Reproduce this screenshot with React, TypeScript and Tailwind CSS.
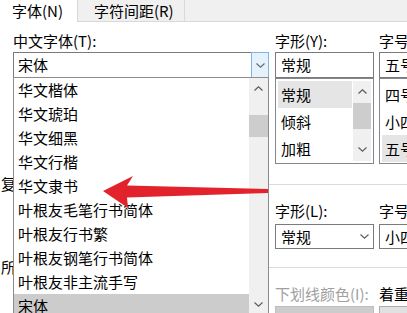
import React from "react";

const fontItems = [
  "华文楷体",
  "华文琥珀",
  "华文细黑",
  "华文行楷",
  "华文隶书",
  "叶根友毛笔行书简体",
  "叶根友行书繁",
  "叶根友钢笔行书简体",
  "叶根友非主流手写",
  "宋体",
];

const ChevronUp: React.FC = () => (
  <svg width="9" height="5" viewBox="0 0 9 5" fill="none">
    <polyline points="0.5,4.5 4.5,0.8 8.5,4.5" stroke="#606060" strokeWidth="1.3" />
  </svg>
);

const ChevronDown: React.FC<{ color?: string }> = ({ color = "#606060" }) => (
  <svg width="9" height="5" viewBox="0 0 9 5" fill="none">
    <polyline points="0.5,0.5 4.5,4.2 8.5,0.5" stroke={color} strokeWidth="1.2" />
  </svg>
);

const ListBox: React.FC<{ items: string[]; selected: number; scrollbar?: boolean }> = ({
  items,
  selected,
  scrollbar,
}) => (
  <div className="flex h-[86px] border border-[#828790] bg-white p-[2px]">
    <div className="flex-1 flex flex-col">
      {items.map((it, i) => (
        <div
          key={it}
          className={`h-[27px] leading-[27px] pl-[3px] text-[15px] ${i === selected ? "bg-[#e5e5e5]" : ""}`}
        >
          {it}
        </div>
      ))}
    </div>
    {scrollbar && (
      <div className="w-[18px] ml-[1px] flex flex-col items-center bg-[#f0f0f0]">
        <div className="h-[20px] flex items-center justify-center">
          <ChevronUp />
        </div>
        <div className="mt-[2px] h-[26px] w-full bg-[#cdcdcd]" />
        <div className="mt-[10px] h-[20px] flex items-center justify-center">
          <ChevronDown />
        </div>
      </div>
    )}
  </div>
);

const Label: React.FC<{ children: React.ReactNode; muted?: boolean }> = ({ children, muted }) => (
  <div className={`h-[20px] leading-[20px] text-[15px] whitespace-nowrap ${muted ? "text-[#a0a0a0]" : ""}`}>
    {children}
  </div>
);

const GroupLine: React.FC<{ title: string }> = ({ title }) => (
  <div className="-ml-[12px] flex items-center h-[20px]">
    <span className="text-[15px] leading-[20px] whitespace-nowrap">{title}</span>
    <div className="ml-2 flex-1 h-px bg-[#dcdcdc]" />
  </div>
);

export default function App() {
  return (
    <div className="relative w-[407px] h-[313px] overflow-hidden bg-white text-black font-['Noto_Sans_CJK_SC',sans-serif]">
      {/* tabs */}
      <div className="flex h-[22px] bg-[#f0f0f0] border-b border-[#d9d9d9]">
        <div className="w-[78px] h-[22px] bg-white border-r border-[#d9d9d9] pl-[12px] text-[15px] leading-[21px]">
          字体(N)
        </div>
        <div className="w-[107px] border-r border-[#d9d9d9] pl-[16px] text-[15px] leading-[21px]">
          字符间距(R)
        </div>
      </div>

      {/* body */}
      <div className="pl-[13px] pt-[9px] w-[520px]">
        <div className="flex">
          <div className="w-[256px]">
            <Label>中文字体(T):</Label>
            <div className="relative mt-[1px] h-[26px] border border-[#7a7a7a] pl-[4px] text-[15px] leading-[24px]">
              宋体
              <div className="absolute -right-px -top-px -bottom-px w-[18px] border border-[#7eb4ea] bg-[#e5f1fb] flex items-center justify-center">
                <ChevronDown color="#5b6f86" />
              </div>
            </div>
          </div>
          <div className="w-[99px] ml-[6px]">
            <Label>字形(Y):</Label>
            <div className="mt-[1px] h-[26px] border border-[#7a7a7a] pl-[5px] text-[15px] leading-[24px]">常规</div>
            <ListBox items={["常规", "倾斜", "加粗"]} selected={0} scrollbar />
          </div>
          <div className="w-[99px] ml-[5px]">
            <Label>字号(Z):</Label>
            <div className="mt-[1px] h-[26px] border border-[#7a7a7a] pl-[5px] text-[15px] leading-[24px]">五号</div>
            <ListBox items={["四号", "小四", "五号"]} selected={2} />
          </div>
        </div>

        <div className="mt-[10px]">
          <GroupLine title="复杂文种" />
        </div>

        <div className="flex mt-[7px]">
          <div className="w-[256px]" />
          <div className="w-[99px] ml-[6px]">
            <Label>字形(L):</Label>
            <div className="mt-[3px] h-[25px] border border-[#7a7a7a] pl-[5px] pr-[4px] text-[15px] leading-[23px] flex items-center justify-between">
              <span>常规</span>
              <ChevronDown />
            </div>
          </div>
          <div className="w-[99px] ml-[5px]">
            <Label>字号(Z):</Label>
            <div className="mt-[3px] h-[25px] border border-[#7a7a7a] pl-[5px] text-[15px] leading-[23px]">小四</div>
          </div>
        </div>

        <div className="mt-[8px]">
          <GroupLine title="所有文字" />
        </div>

        <div className="flex mt-[7px]">
          <div className="w-[256px]" />
          <div className="w-[99px] ml-[6px]">
            <Label muted>下划线颜色(I):</Label>
            <div className="mt-[2px] h-[25px] border border-[#bfbfbf] bg-[#cccccc]" />
          </div>
          <div className="w-[99px] ml-[5px]">
            <Label>着重号(·):</Label>
            <div className="mt-[2px] h-[25px] border border-[#adadad] bg-[#e1e1e1]" />
          </div>
        </div>
      </div>

      {/* open font dropdown */}
      <div className="absolute left-[13px] top-[77px] w-[256px] h-[241px] flex border border-[#8c8c8c] bg-white">
        <div className="flex-1 flex flex-col">
          {fontItems.map((f) => (
            <div
              key={f}
              className={`h-[24px] leading-[24px] pl-[4px] text-[15px] whitespace-nowrap ${f === "宋体" ? "bg-[#cccccc]" : ""}`}
            >
              {f}
            </div>
          ))}
        </div>
        <div className="w-[19px] bg-[#f0f0f0] flex flex-col items-center">
          <div className="h-[21px] flex items-center justify-center">
            <ChevronUp />
          </div>
          <div className="mt-[16px] h-[22px] w-full bg-[#cdcdcd]" />
          <div className="flex-1" />
          <div className="h-[21px] mb-[2px] flex items-center justify-center">
            <ChevronDown />
          </div>
        </div>
      </div>

      {/* red annotation arrow */}
      <svg className="absolute left-0 top-0 pointer-events-none" width="407" height="313" viewBox="0 0 407 313">
        <polygon
          points="103,191 133,176 127,185.5 268,189 268,193 127,197.5 128,208"
          fill="#e3232b"
        />
      </svg>
    </div>
  );
}
